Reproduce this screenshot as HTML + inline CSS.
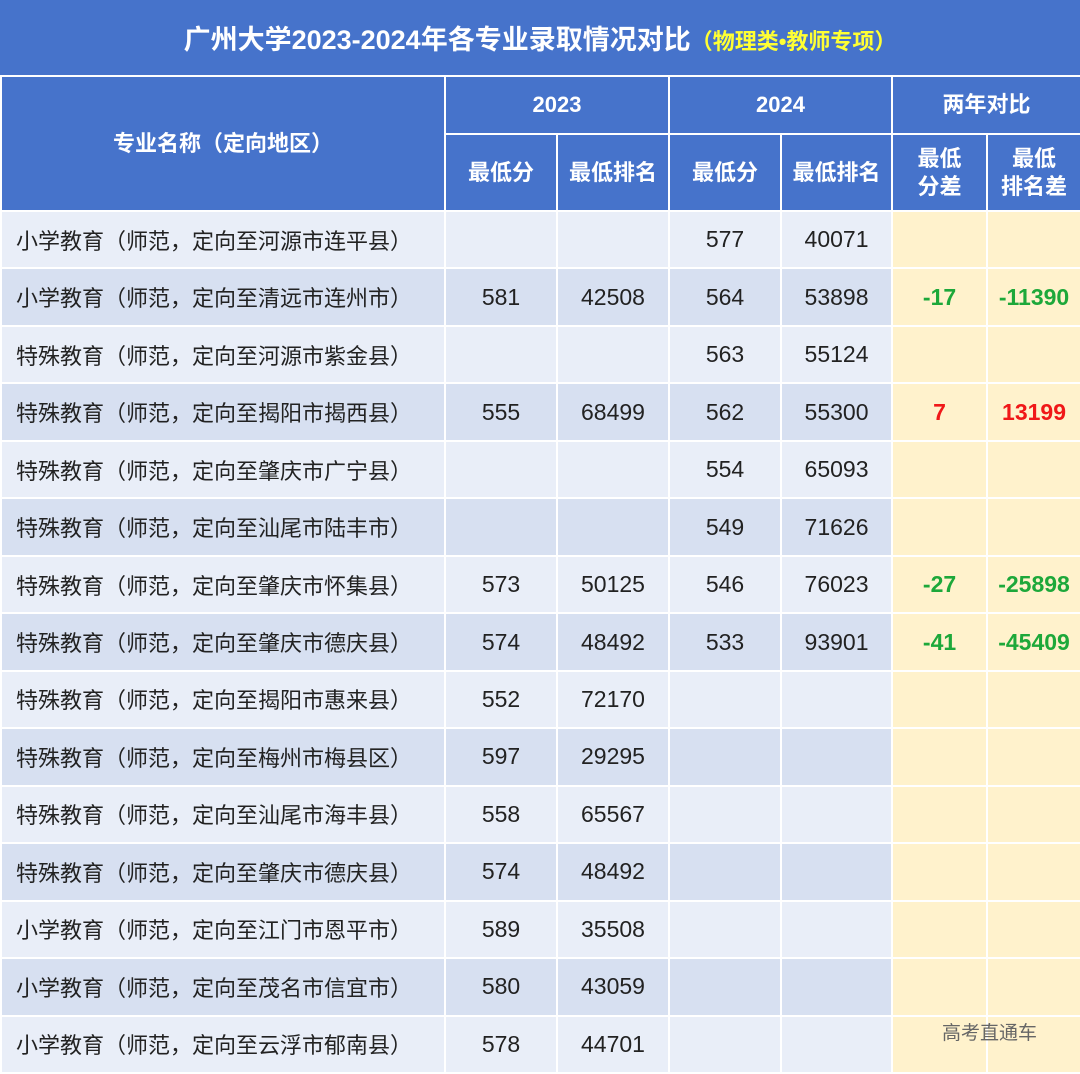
<!DOCTYPE html>
<html><head><meta charset="utf-8"><style>
*{margin:0;padding:0;box-sizing:border-box}
body{width:1080px;height:1072px;overflow:hidden;background:#4673CB;font-family:"Liberation Sans","Noto Sans CJK SC",sans-serif;position:relative}
.title{position:absolute;left:0;top:0;width:1080px;height:75px;background:#4673CB;color:#fff;font-size:27px;font-weight:bold;text-align:center;line-height:80px}
.title span{color:#FFFF33;font-size:22px}
table{position:absolute;left:0;top:75px;width:1080px;border-collapse:collapse;table-layout:fixed}
td,th{border:2px solid #fff;text-align:center;font-size:23px;color:#222;font-weight:normal;overflow:hidden;white-space:nowrap}
th{background:#4673CB;color:#fff;font-weight:bold;font-size:22px;line-height:28px}
tr.h1 th{height:58px}
tr.h2 th{height:77px}
tbody tr{height:57.47px}
tbody tr:nth-child(odd) td{background:#E9EEF8}
tbody tr:nth-child(even) td{background:#D7E0F1}
tbody tr td:nth-child(6),tbody tr td:nth-child(7){background:#FFF2CC!important;font-weight:bold;font-size:23px}
td:first-child{text-align:left;padding-left:14px;font-size:22px}
.g{color:#1DA83A}.r{color:#F01818}
.wm{position:absolute;left:942px;top:1018px;color:#666;font-size:19px}
</style></head><body>
<div class="title">广州大学2023-2024年各专业录取情况对比<span>（物理类•教师专项）</span></div>
<table>
<colgroup><col style="width:444px"><col style="width:112px"><col style="width:112px"><col style="width:112px"><col style="width:111px"><col style="width:95px"><col style="width:94px"></colgroup>
<thead>
<tr class="h1"><th rowspan="2">专业名称（定向地区）</th><th colspan="2">2023</th><th colspan="2">2024</th><th colspan="2">两年对比</th></tr>
<tr class="h2"><th>最低分</th><th>最低排名</th><th>最低分</th><th>最低排名</th><th>最低<br>分差</th><th>最低<br>排名差</th></tr>
</thead>
<tbody>
<tr><td>小学教育（师范，定向至河源市连平县）</td><td></td><td></td><td>577</td><td>40071</td><td></td><td></td></tr>
<tr><td>小学教育（师范，定向至清远市连州市）</td><td>581</td><td>42508</td><td>564</td><td>53898</td><td class="g">-17</td><td class="g">-11390</td></tr>
<tr><td>特殊教育（师范，定向至河源市紫金县）</td><td></td><td></td><td>563</td><td>55124</td><td></td><td></td></tr>
<tr><td>特殊教育（师范，定向至揭阳市揭西县）</td><td>555</td><td>68499</td><td>562</td><td>55300</td><td class="r">7</td><td class="r">13199</td></tr>
<tr><td>特殊教育（师范，定向至肇庆市广宁县）</td><td></td><td></td><td>554</td><td>65093</td><td></td><td></td></tr>
<tr><td>特殊教育（师范，定向至汕尾市陆丰市）</td><td></td><td></td><td>549</td><td>71626</td><td></td><td></td></tr>
<tr><td>特殊教育（师范，定向至肇庆市怀集县）</td><td>573</td><td>50125</td><td>546</td><td>76023</td><td class="g">-27</td><td class="g">-25898</td></tr>
<tr><td>特殊教育（师范，定向至肇庆市德庆县）</td><td>574</td><td>48492</td><td>533</td><td>93901</td><td class="g">-41</td><td class="g">-45409</td></tr>
<tr><td>特殊教育（师范，定向至揭阳市惠来县）</td><td>552</td><td>72170</td><td></td><td></td><td></td><td></td></tr>
<tr><td>特殊教育（师范，定向至梅州市梅县区）</td><td>597</td><td>29295</td><td></td><td></td><td></td><td></td></tr>
<tr><td>特殊教育（师范，定向至汕尾市海丰县）</td><td>558</td><td>65567</td><td></td><td></td><td></td><td></td></tr>
<tr><td>特殊教育（师范，定向至肇庆市德庆县）</td><td>574</td><td>48492</td><td></td><td></td><td></td><td></td></tr>
<tr><td>小学教育（师范，定向至江门市恩平市）</td><td>589</td><td>35508</td><td></td><td></td><td></td><td></td></tr>
<tr><td>小学教育（师范，定向至茂名市信宜市）</td><td>580</td><td>43059</td><td></td><td></td><td></td><td></td></tr>
<tr><td>小学教育（师范，定向至云浮市郁南县）</td><td>578</td><td>44701</td><td></td><td></td><td></td><td></td></tr>
</tbody></table>
<div class="wm">高考直通车</div>
</body></html>
